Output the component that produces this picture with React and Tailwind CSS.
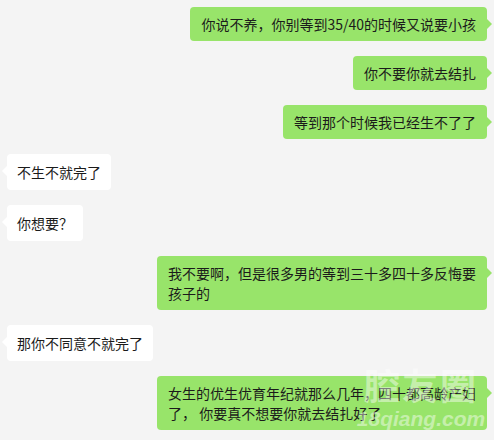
const messages = [
  { me: true, text: "你说不养，你别等到35/40的时候又说要小孩" },
  { me: true, text: "你不要你就去结扎" },
  { me: true, text: "等到那个时候我已经生不了了" },
  { me: false, text: "不生不就完了" },
  { me: false, text: "你想要？" },
  { me: true, text: "我不要啊，但是很多男的等到三十多四十多反悔要孩子的" },
  { me: false, text: "那你不同意不就完了" },
  { me: true, text: "女生的优生优育年纪就那么几年，四十都高龄产妇了， 你要真不想要你就去结扎好了" },
];

function Bubble({ me, text }) {
  return (
    <div className={me ? "flex justify-end pr-[7px]" : "flex justify-start pl-[7px]"}>
      <div
        className={
          me
            ? "relative max-w-[330px] rounded-[4px] bg-[#98e46a] px-[11px] py-[7px] text-[14px] leading-[20px] text-[#1b1b1b]"
            : "relative max-w-[330px] rounded-[4px] bg-white px-[10px] py-[8px] text-[14px] leading-[20px] text-[#1b1b1b]"
        }
      >
        {me ? (
          <span className="absolute right-[-5px] top-[12px] h-0 w-0 border-y-[5px] border-l-[5px] border-y-transparent border-l-[#98e46a]" />
        ) : (
          <span className="absolute left-[-5px] top-[12px] h-0 w-0 border-y-[5px] border-r-[5px] border-y-transparent border-r-white" />
        )}
        {text}
      </div>
    </div>
  );
}

export default function App() {
  return (
    <div
      className="relative h-[440px] w-[494px] overflow-hidden bg-[#f4f4f4]"
      style={{ fontFamily: '"Noto Sans CJK SC", "Noto Sans", sans-serif' }}
    >
      <div className="flex flex-col gap-[15px] pt-[7px]">
        {messages.map((m, i) => (
          <Bubble key={i} me={m.me} text={m.text} />
        ))}
      </div>
      {/* watermark */}
      <div className="pointer-events-none absolute left-[356px] top-[363px] flex w-[130px] flex-col items-center whitespace-nowrap text-white/45">
        <span className="text-[36px] font-bold leading-[43px] tracking-[2px]">腔友圈</span>
        <span
          className="text-[21px] font-bold italic leading-[26px]"
          style={{ fontFamily: '"Liberation Sans", sans-serif' }}
        >
          18qiang.com
        </span>
      </div>
    </div>
  );
}
